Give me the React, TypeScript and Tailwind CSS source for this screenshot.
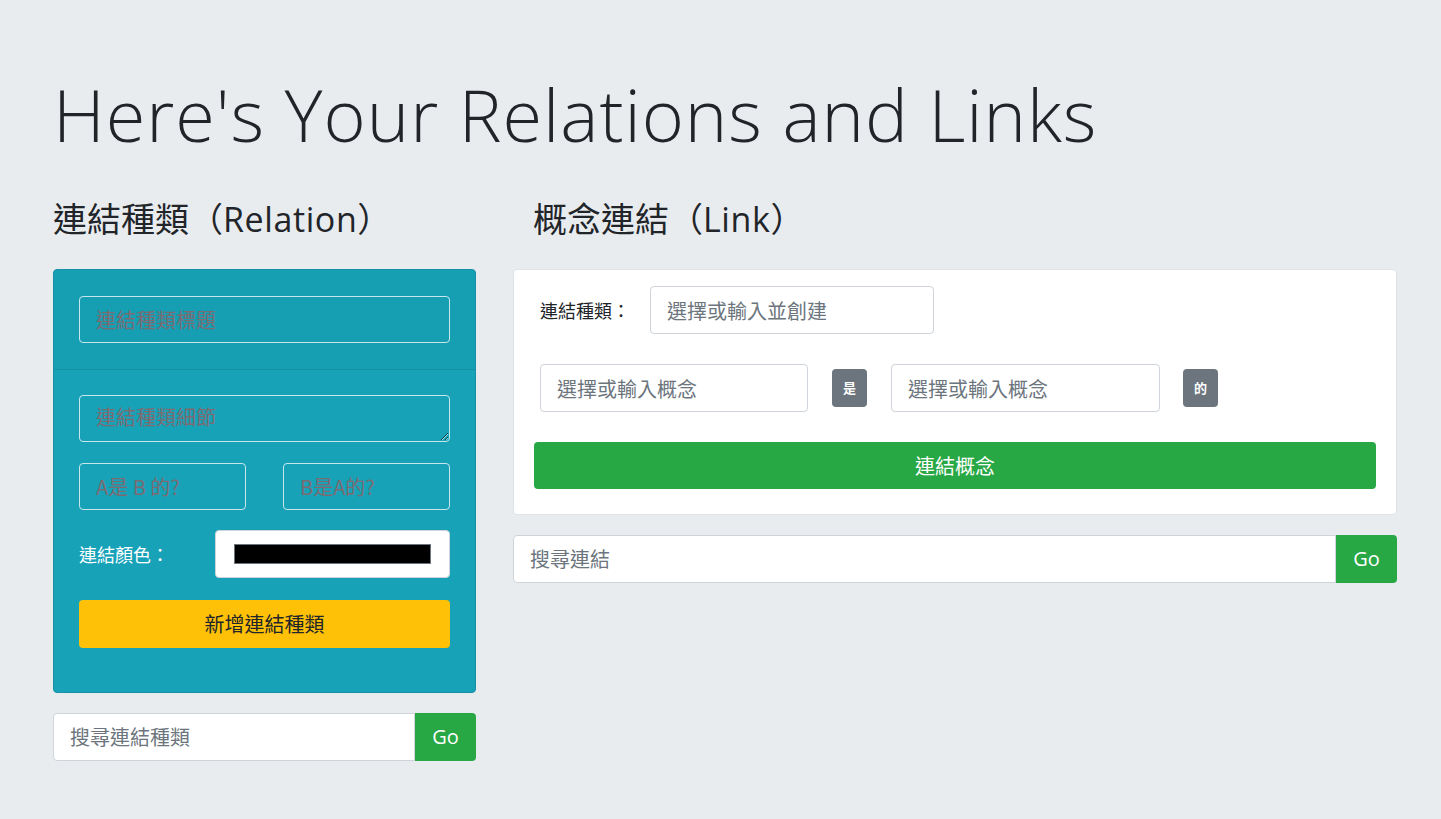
const cjk = "font-['Noto_Sans_CJK_TC','Noto_Sans',sans-serif]";

const Field = ({ ph, className = "" }: { ph: string; className?: string }) => (
  <input
    placeholder={ph}
    className={`h-[48px] rounded border border-[#ced4da] bg-white px-4 text-[20px] text-[#495057] placeholder:text-[#6c757d] outline-none ${className}`}
  />
);

const TealField = ({ ph, className = "" }: { ph: string; className?: string }) => (
  <input
    placeholder={ph}
    className={`h-[47px] rounded border border-[#c9e6ec] bg-transparent px-4 text-[20px] placeholder:text-[#7d6b72] outline-none ${className}`}
  />
);

const Badge = ({ text }: { text: string }) => (
  <span className="flex h-[38px] w-[35px] items-center justify-center rounded bg-[#6c757d] text-[13px] font-bold text-white">
    {text}
  </span>
);

const SearchBar = ({ ph }: { ph: string }) => (
  <div className="flex h-[48px] w-full">
    <input
      placeholder={ph}
      className="min-w-0 flex-1 rounded-l border border-[#ced4da] bg-white px-4 text-[20px] placeholder:text-[#6c757d] outline-none"
    />
    <button className="w-[61px] rounded-r bg-[#28a745] font-['Open_Sans',sans-serif] text-[20px] font-medium text-white">
      Go
    </button>
  </div>
);

export default function App() {
  return (
    <div className={`min-h-[819px] w-full bg-[#e9ecef] text-[#212529] ${cjk}`}>
      <div className="ml-[53px] w-[1344px] pt-[71px]">
        <h1 className="font-['Open_Sans',sans-serif] text-[72px] font-light leading-[1.2] tracking-[0.95px]">
          Here's Your Relations and Links
        </h1>

        <div className="mt-[41px] flex gap-[37px]">
          {/* relations */}
          <div className="w-[423px]">
            <h3 className="text-[34px] leading-[1.2]">
              連結種類（<span className="font-['Open_Sans',sans-serif] font-medium tracking-[0.6px]">Relation</span>）
            </h3>

            <div className="mt-[29px] overflow-hidden rounded border border-[#1591a4] bg-[#17a2b8]">
              <div className="border-b border-[#1590a3] bg-[#169eb3] px-[25px] py-[26px]">
                <TealField ph="連結種類標題" className="w-full" />
              </div>
              <div className="flex flex-col px-[25px] pt-[25px] pb-[44px]">
                <textarea
                  placeholder="連結種類細節"
                  rows={1}
                  className="h-[47px] w-full rounded border border-[#c9e6ec] bg-transparent px-4 py-[6px] text-[20px] placeholder:text-[#7d6b72] outline-none"
                />
                <div className="mt-[21px] flex justify-between">
                  <TealField ph="A是 B 的?" className="w-[167px]" />
                  <TealField ph="B是A的?" className="w-[167px]" />
                </div>
                <div className="mt-[20px] flex items-center justify-between">
                  <span className="text-[18px] text-white">連結顏色：</span>
                  <div className="flex h-[48px] w-[235px] items-center justify-center rounded border border-[#ced4da] bg-white">
                    <div className="h-[20px] w-[197px] border border-[#6c757d] bg-black" />
                  </div>
                </div>
                <button className="mt-[22px] h-[48px] w-full rounded bg-[#ffc107] text-[20px] text-[#212529]">
                  新增連結種類
                </button>
              </div>
            </div>

            <div className="mt-[20px]">
              <SearchBar ph="搜尋連結種類" />
            </div>
          </div>

          {/* links */}
          <div className="w-[884px]">
            <h3 className="pl-[20px] text-[34px] leading-[1.2]">
              概念連結（<span className="font-['Open_Sans',sans-serif] font-medium tracking-[0.6px]">Link</span>）
            </h3>

            <div className="mt-[29px] rounded border border-[#dee2e6] bg-white px-[20px] pt-[16px] pb-[25px]">
              <div className="flex items-center pl-[6px]">
                <span className="w-[110px] text-[18px]">連結種類：</span>
                <Field ph="選擇或輸入並創建" className="w-[284px]" />
              </div>
              <div className="mt-[30px] flex items-center pl-[6px]">
                <Field ph="選擇或輸入概念" className="w-[268px]" />
                <div className="mx-[24px]">
                  <Badge text="是" />
                </div>
                <Field ph="選擇或輸入概念" className="w-[269px]" />
                <div className="ml-[23px]">
                  <Badge text="的" />
                </div>
              </div>
              <button className="mt-[30px] h-[47px] w-full rounded bg-[#28a745] text-[20px] text-white">
                連結概念
              </button>
            </div>

            <div className="mt-[20px]">
              <SearchBar ph="搜尋連結" />
            </div>
          </div>
        </div>
      </div>
    </div>
  );
}
